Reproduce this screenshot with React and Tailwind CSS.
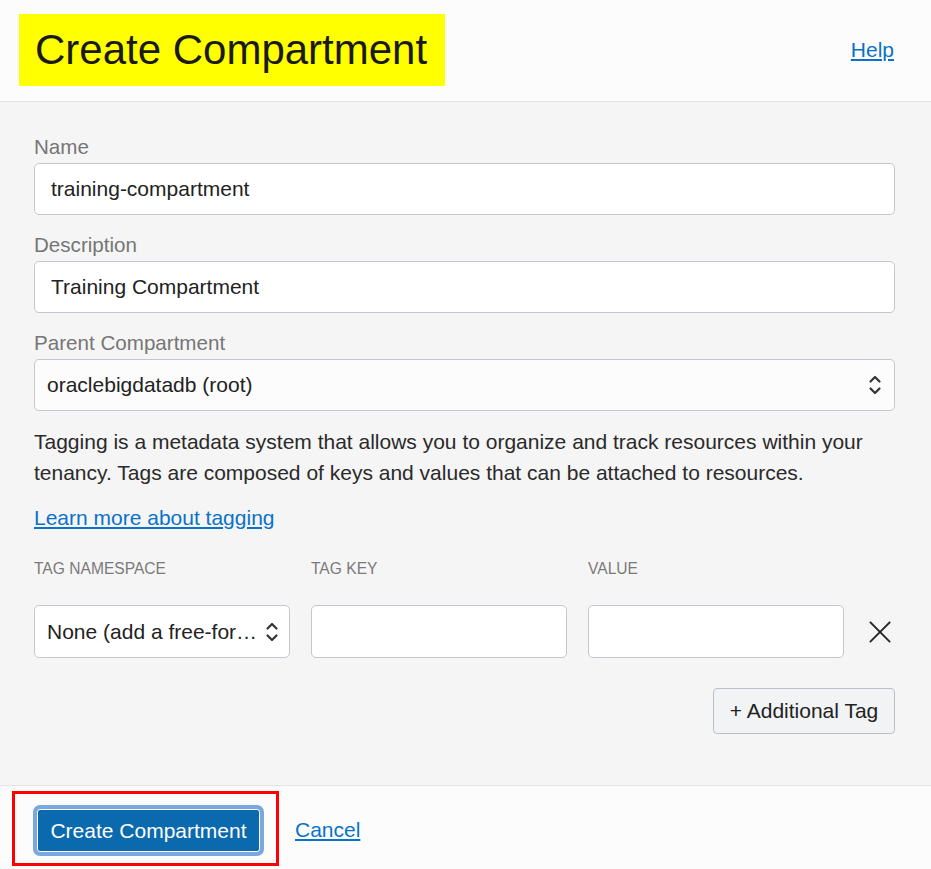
const Chevrons = ({ className = '' }) => (
  <svg width="14" height="22" viewBox="0 0 14 22" className={className} fill="none" stroke="#333" strokeWidth="2.2" strokeLinecap="round" strokeLinejoin="round">
    <path d="M2.5 7.5 L7 3 L11.5 7.5" />
    <path d="M2.5 14.5 L7 19 L11.5 14.5" />
  </svg>
)

const CloseIcon = ({ className = '' }) => (
  <svg width="22" height="22" viewBox="0 0 22 22" className={className} fill="none" stroke="#222" strokeWidth="1.8" strokeLinecap="square">
    <path d="M1.5 1.5 L20.5 20.5" />
    <path d="M20.5 1.5 L1.5 20.5" />
  </svg>
)

const Field = ({ label, value, className = '' }) => (
  <div className={className}>
    <div className="h-6 text-[20.6px] leading-6 text-[#767676]">{label}</div>
    <div className="mt-1 flex h-[52px] items-center rounded-[5px] border border-[#c3c8cf] bg-white px-4 text-[21px] text-[#222]">
      {value}
    </div>
  </div>
)

const App = () => {
  return (
    <div className="flex h-[869px] w-[931px] flex-col bg-[#f5f5f5] font-['Liberation_Sans',Arial,sans-serif]">
      <header className="flex h-[102px] shrink-0 items-start justify-between border-b border-[#e5e5e5] bg-[#fcfcfc] pl-[19px] pr-[37px] pt-[14px]">
        <div className="flex h-[72px] w-[426px] items-center bg-[#ffff00] pl-4">
          <h1 className="text-[42px] leading-none text-[#1a1a1a]">Create Compartment</h1>
        </div>
        <a href="#" className="mt-[20px] text-[21px] text-[#0a72c8] underline underline-offset-2">Help</a>
      </header>

      <main className="flex-1 pl-[34px] pr-[36px] pt-[33px]">
        <Field label="Name" value="training-compartment" />
        <Field label="Description" value="Training Compartment" className="mt-[18px]" />

        <div className="mt-[18px]">
          <div className="h-6 text-[20.6px] leading-6 text-[#767676]">Parent Compartment</div>
          <div className="mt-1 flex h-[52px] items-center justify-between rounded-[5px] border border-[#c3c8cf] bg-[#fcfcfc] pl-3 pr-[12px] text-[21px] text-[#222]">
            <span>oraclebigdatadb (root)</span>
            <Chevrons />
          </div>
        </div>

        <p className="mt-[15px] text-[21px] leading-[31px] text-[#2a2a2a]">
          Tagging is a metadata system that allows you to organize and track resources within your tenancy. Tags are composed of keys and values that can be attached to resources.
        </p>

        <a href="#" className="mt-[15px] block w-fit text-[21px] leading-[30px] text-[#0a72c8] underline underline-offset-2">
          Learn more about tagging
        </a>

        <div className="mt-[26px] flex gap-[21px] text-[15.6px] leading-5 uppercase text-[#7a7a7a]">
          <div className="w-[256px] shrink-0">Tag Namespace</div>
          <div className="w-[256px] shrink-0">Tag Key</div>
          <div className="w-[256px] shrink-0">Value</div>
        </div>

        <div className="mt-[26px] flex items-center gap-[21px]">
          <div className="flex h-[53px] w-[256px] shrink-0 items-center justify-between rounded-[5px] border border-[#c3c8cf] bg-white pl-3 pr-[10px] text-[21px] text-[#222]">
            <span className="truncate">None (add a free-for…</span>
            <Chevrons className="ml-1 shrink-0" />
          </div>
          <div className="h-[53px] w-[256px] shrink-0 rounded-[5px] border border-[#c3c8cf] bg-white" />
          <div className="h-[53px] w-[256px] shrink-0 rounded-[5px] border border-[#c3c8cf] bg-white" />
          <CloseIcon className="ml-[4px] shrink-0" />
        </div>

        <div className="mt-[30px] flex justify-end">
          <button className="h-[46px] w-[182px] rounded-[4px] border border-[#b9c0c8] bg-[#f2f3f4] text-[21px] text-[#222]">
            + Additional Tag
          </button>
        </div>
      </main>

      <footer className="flex h-[84px] shrink-0 items-start border-t border-[#e5e5e5] bg-[#fcfcfc] pl-[12px] pt-[5px]">
        <div className="flex h-[75px] w-[267px] items-start border-[3px] border-[#ff0000] pl-[18px] pt-[11px]">
          <button className="h-[51px] w-[231px] rounded-[7px] bg-[#7aa7df] p-[4px]">
            <span className="flex h-full w-full items-center justify-center rounded-[3px] border border-white bg-[#0a6aad] text-[21px] text-white">
              Create Compartment
            </span>
          </button>
        </div>
        <a href="#" className="ml-[16px] mt-[23px] text-[21px] text-[#0a72c8] underline underline-offset-2">Cancel</a>
      </footer>
    </div>
  )
}

export default App
